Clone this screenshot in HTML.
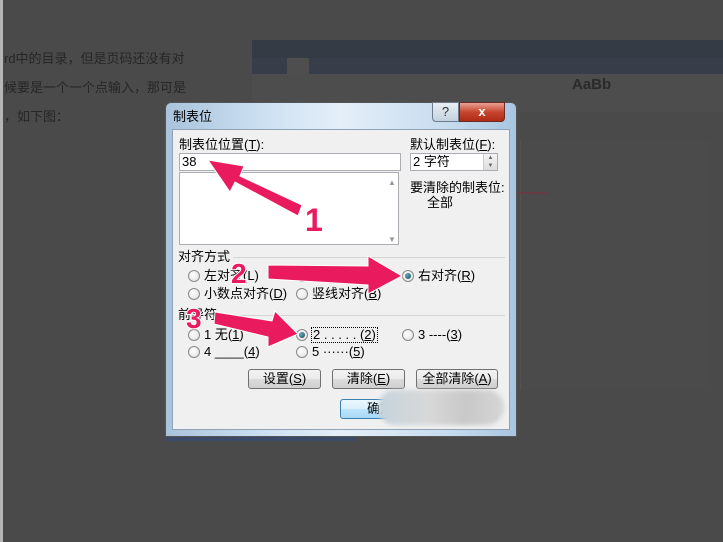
<!DOCTYPE html>
<html><head><meta charset="utf-8"><style>
*{margin:0;padding:0;box-sizing:border-box}
body{width:723px;height:542px;background:#4a4a4a;position:relative;overflow:hidden;font-family:"Liberation Sans","Noto Sans CJK SC",sans-serif;font-size:12px;color:#000}
.a{position:absolute}
.t{position:absolute;white-space:nowrap;font-size:13px;line-height:14px}
.r{position:absolute;width:12px;height:12px;border-radius:50%;border:1px solid #8a8a8a;background:radial-gradient(circle at 40% 40%,#fff,#ddd)}
.r.on::after{content:"";position:absolute;left:2px;top:2px;width:6px;height:6px;border-radius:50%;background:radial-gradient(circle at 35% 35%,#6ab,#145)}
.btn{position:absolute;height:20px;border:1px solid #707070;border-radius:3px;background:linear-gradient(#f2f2f2,#ebebeb 50%,#dcdcdc 51%,#cfcfcf);text-align:center;line-height:18px;font-size:13px}
</style></head><body>
<div class="a" style="left:0;top:0;width:3px;height:542px;background:#b5b5b5"></div>
<div class="t" style="left:4px;top:52px;color:#262626;font-size:13px">rd中的目录，但是页码还没有对</div>
<div class="t" style="left:4px;top:81px;color:#262626;font-size:13px">候要是一个一个点输入，那可是</div>
<div class="t" style="left:4px;top:110px;color:#262626;font-size:13px">，如下图：</div>
<div class="a" style="left:252px;top:40px;width:471px;height:18px;background:#353b45"></div>
<div class="a" style="left:252px;top:58px;width:471px;height:16px;background:#373e49"></div>
<div class="a" style="left:287px;top:58px;width:22px;height:16px;background:#4e4e4e"></div>
<div class="a" style="left:252px;top:74px;width:471px;height:38px;background:#4d4d4d"></div>
<div class="t" style="left:572px;top:78px;color:#2a2a2a;font-size:15px;font-weight:bold">AaBb</div>
<div class="a" style="left:252px;top:112px;width:471px;height:14px;background:#4a4a4a"></div>
<div class="a" style="left:520px;top:140px;width:190px;height:250px;background:#4b4b4b;border-left:1px solid #525252"></div>
<div class="a" style="left:518px;top:192px;width:30px;height:2px;background:#6a3a44"></div>
<div class="a" style="left:165px;top:102px;width:352px;height:335px;border:1px solid #555;border-radius:6px 6px 0 0;background:linear-gradient(90deg,#a9c3dc,#cfe2f3 30%,#e4eff9 50%,#c7dcef 80%,#a8c6e0)"></div>
<div class="t" style="left:173px;top:110px;font-size:13px">制表位</div>
<div class="a" style="left:432px;top:102px;width:27px;height:20px;border:1px solid #6b7c8e;border-radius:0 0 0 4px;background:linear-gradient(#e8eef4,#c4d2df);text-align:center;font-size:13px;line-height:18px;color:#333">?</div>
<div class="a" style="left:459px;top:102px;width:46px;height:20px;border:1px solid #6b2a22;border-radius:0 0 4px 0;background:linear-gradient(#e8a193,#c7452f 50%,#b02a14);text-align:center;color:#fff;font-weight:bold;font-size:13px;line-height:18px">x</div>
<div class="a" style="left:172px;top:129px;width:338px;height:301px;background:#f0f0f0;border:1px solid #8ea3b8"></div>
<div class="t" style="left:179px;top:138px">制表位位置(<u>T</u>):</div>
<div class="a" style="left:179px;top:153px;width:222px;height:18px;background:#fff;border:1px solid #abadb3"></div>
<div class="t" style="left:182px;top:155px">38</div>
<div class="a" style="left:179px;top:172px;width:220px;height:73px;background:#fff;border:1px solid #abadb3"></div>
<div class="t" style="left:388px;top:176px;font-size:8px;color:#999">▲</div>
<div class="t" style="left:388px;top:233px;font-size:8px;color:#999">▼</div>
<div class="t" style="left:410px;top:138px">默认制表位(<u>F</u>):</div>
<div class="a" style="left:410px;top:153px;width:88px;height:18px;background:#fff;border:1px solid #abadb3"></div>
<div class="t" style="left:413px;top:155px">2 字符</div>
<div class="a" style="left:483px;top:154px;width:14px;height:16px;background:linear-gradient(#f4f4f4,#ddd);border-left:1px solid #ccc;font-size:6px;color:#666;text-align:center;line-height:8px">▲<br>▼</div>
<div class="t" style="left:410px;top:181px">要清除的制表位:</div>
<div class="t" style="left:427px;top:196px">全部</div>
<div class="t" style="left:178px;top:250px">对齐方式</div>
<div class="a" style="left:233px;top:257px;width:272px;height:1px;background:#d5d5d5"></div>
<div class="r" style="left:188px;top:270px"></div><div class="t" style="left:204px;top:269px">左对齐(L)</div>
<div class="r" style="left:296px;top:270px"></div><div class="t" style="left:312px;top:269px">居中(C)</div>
<div class="r on" style="left:402px;top:270px"></div><div class="t" style="left:418px;top:269px">右对齐(<u>R</u>)</div>
<div class="r" style="left:188px;top:288px"></div><div class="t" style="left:204px;top:287px">小数点对齐(<u>D</u>)</div>
<div class="r" style="left:296px;top:288px"></div><div class="t" style="left:312px;top:287px">竖线对齐(<u>B</u>)</div>
<div class="t" style="left:178px;top:308px">前导符</div>
<div class="a" style="left:225px;top:315px;width:280px;height:1px;background:#d5d5d5"></div>
<div class="r" style="left:188px;top:329px"></div><div class="t" style="left:204px;top:328px">1 无(<u>1</u>)</div>
<div class="r on" style="left:296px;top:329px"></div><div class="t" style="left:311px;top:327px;border:1px dotted #000;padding:0 1px">2 . . . . . (<u>2</u>)</div>
<div class="r" style="left:402px;top:329px"></div><div class="t" style="left:418px;top:328px">3 ----(<u>3</u>)</div>
<div class="r" style="left:188px;top:346px"></div><div class="t" style="left:204px;top:345px">4 ____(<u>4</u>)</div>
<div class="r" style="left:296px;top:346px"></div><div class="t" style="left:312px;top:345px">5 ······(<u>5</u>)</div>
<div class="btn" style="left:248px;top:369px;width:73px">设置(<u>S</u>)</div>
<div class="btn" style="left:332px;top:369px;width:73px">清除(<u>E</u>)</div>
<div class="btn" style="left:416px;top:369px;width:82px">全部清除(<u>A</u>)</div>
<div class="btn" style="left:340px;top:399px;width:158px;border-color:#3c7fb1;background:linear-gradient(#eaf6fd,#d9f0fc 50%,#bee6fd 51%,#a7d9f5);text-align:left;padding-left:26px">确定</div>
<div class="a" style="left:378px;top:390px;width:126px;height:35px;border-radius:17px;background:linear-gradient(90deg,#c6d4dc,#d8d8d8 40%,#c8c8c8 70%,#d6d6d6);filter:blur(2px)"></div>
<div class="a" style="left:165px;top:437px;width:190px;height:4px;background:#3c4a6a"></div>
<svg class="a" style="left:0;top:0" width="723" height="542">
<g fill="#ea1a5e" stroke="#fff" stroke-width="1">
<polygon points="302,205 240,176 244,166 208,160 230,192 235,182 298,216"/>
<polygon points="268,265 368,266 368,256 402,276 368,294 368,285 268,279"/>
<polygon points="215,312 272,321 275,311 298,334 268,347 268,337 214,324"/>
</g>
<g font-family="Liberation Sans,sans-serif" font-weight="bold" fill="#ea1a5e" stroke="#fff" stroke-width="2" paint-order="stroke">
<text x="305" y="231" font-size="32">1</text>
<text x="231" y="283" font-size="28">2</text>
<text x="186" y="328" font-size="28">3</text>
</g>
</svg>
</body></html>
